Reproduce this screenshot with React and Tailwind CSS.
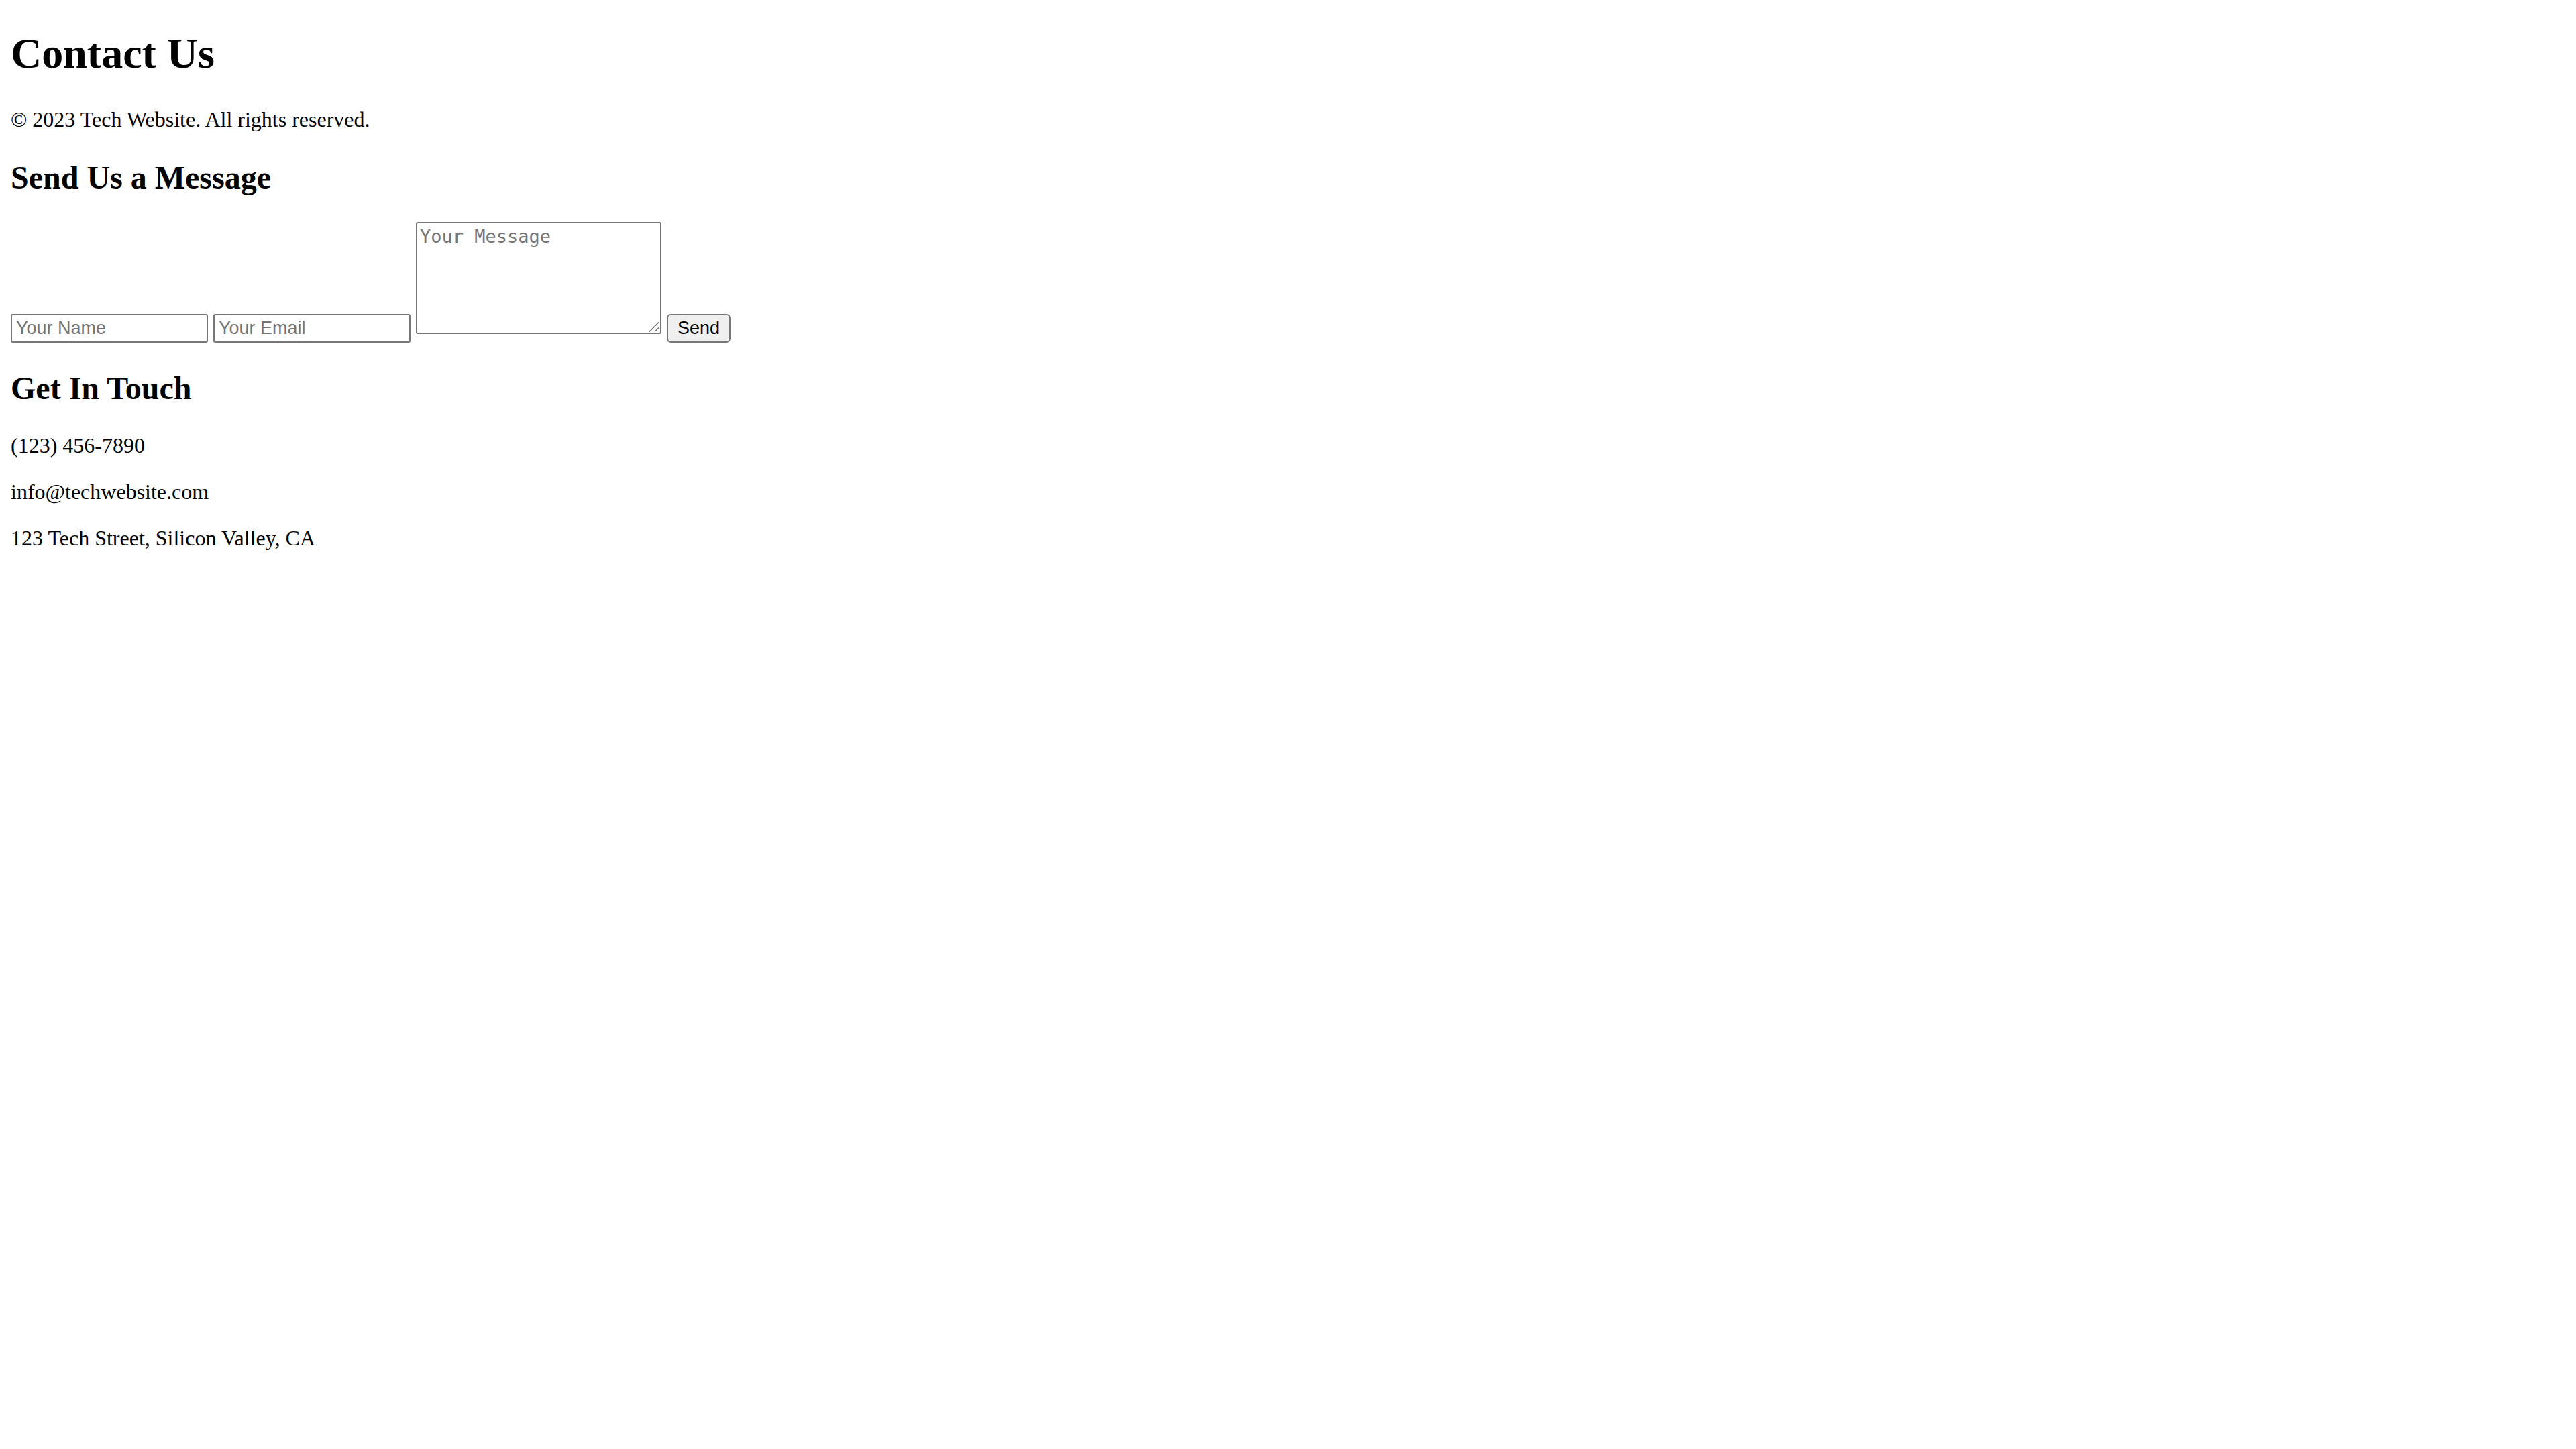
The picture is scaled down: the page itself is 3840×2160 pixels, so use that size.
const serif = 'font-["Liberation_Serif","Times_New_Roman",serif]';
const field =
  'h-[43px] w-[294px] rounded-[3px] border-2 border-[#767676] bg-white px-1.5 font-["Liberation_Sans",Arial,sans-serif] text-[27px] leading-[31px] text-black placeholder:text-[#757575]';
const sectionTitle = 'text-[48px] leading-[55px] font-bold';
const line = 'text-[32px] leading-[37px]';

function ContactForm() {
  return (
    <form className="mt-[39px] mb-10 flex flex-wrap items-end gap-2" onSubmit={(e) => e.preventDefault()}>
      <input type="text" name="name" aria-label="Your Name" placeholder="Your Name" className={field} />
      <input type="email" name="email" aria-label="Your Email" placeholder="Your Email" className={field} />
      <div className="relative mb-[13px]">
        <textarea
          name="message"
          aria-label="Your Message"
          placeholder="Your Message"
          className='block h-[167px] w-[366px] resize-none rounded-[3px] border-2 border-[#767676] bg-white p-1 font-["DejaVu_Sans_Mono",monospace] text-[27px] leading-[31px] text-black placeholder:text-[#757575]'
        />
        <svg
          aria-hidden="true"
          viewBox="0 0 16 16"
          className="pointer-events-none absolute right-[3px] bottom-[3px] size-4"
          fill="none"
          stroke="#666666"
          strokeWidth="1.3"
        >
          <path d="M1 15.5 15.5 1M9 15.5 15.5 9" />
        </svg>
      </div>
      <button
        type="submit"
        className='h-[43px] rounded-[6px] border-2 border-[#767676] bg-[#efefef] px-[14px] font-["Liberation_Sans",Arial,sans-serif] text-[27px] leading-[31px] text-black'
      >
        Send
      </button>
    </form>
  );
}

export default function App() {
  return (
    <div className={`${serif} min-h-screen bg-white px-4 pt-[43px] text-black`}>
      <header>
        <h1 className="text-[64px] leading-[74px] font-bold">Contact Us</h1>
        <p className={`${line} mt-[43px]`}>© 2023 Tech Website. All rights reserved.</p>
      </header>
      <main className="mt-10">
        <section>
          <h2 className={sectionTitle}>Send Us a Message</h2>
          <ContactForm />
        </section>
        <section>
          <h2 className={sectionTitle}>Get In Touch</h2>
          <div className="mt-10 flex flex-col gap-8">
            <p className={line}>(123) 456-7890</p>
            <p className={line}>info@techwebsite.com</p>
            <p className={line}>123 Tech Street, Silicon Valley, CA</p>
          </div>
        </section>
      </main>
    </div>
  );
}
